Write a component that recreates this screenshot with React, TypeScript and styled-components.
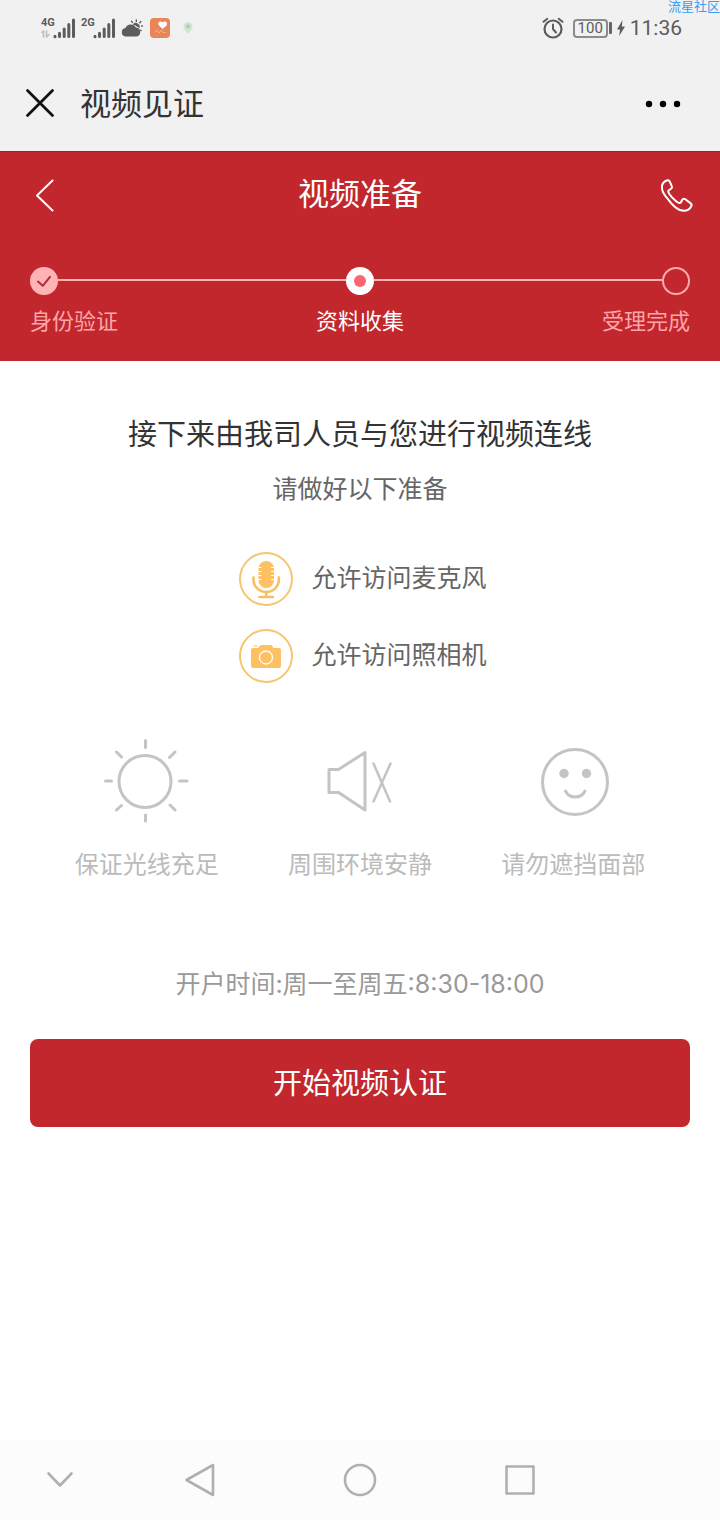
import React from "react";
import styled, { createGlobalStyle } from "styled-components";

const GlobalStyle = createGlobalStyle`
  * { box-sizing: border-box; }
  body {
    margin: 0;
    background: #fff;
    color: #333;
    font-family: Roboto, "Noto Sans CJK SC", sans-serif;
  }
  h1, h2, p, ul, ol { margin: 0; padding: 0; font-weight: 400; list-style: none; }
  svg { display: block; fill: none; overflow: visible; stroke-linecap: round; stroke-linejoin: round; }
`;

const Page = styled.div`
  position: relative;
  display: flex;
  flex-direction: column;
  min-height: 100vh;
  overflow: hidden;
`;

const Watermark = styled.span`
  position: absolute;
  top: 0;
  right: 0;
  font-size: 13px;
  line-height: 13px;
  color: #3d9bf0;
`;

const StatusBar = styled.div`
  display: flex;
  align-items: center;
  justify-content: space-between;
  height: 56px;
  padding: 0 38px 0 41px;
  background: #f1f1f1;
  color: #5c5c5c;
`;

const StatusGroup = styled.div<{ $gap: number }>`
  display: flex;
  align-items: center;
  gap: ${(p) => p.$gap}px;
`;

const Signal = styled.div`
  display: flex;
  align-items: flex-start;
  font-size: 11px;
  line-height: 11px;
  font-weight: 700;
`;

const Network = styled.div`
  display: flex;
  flex-direction: column;
  align-items: flex-start;
  gap: 2px;
  width: 12px;
`;

const Battery = styled.div`
  display: flex;
  align-items: center;
  gap: 1px;
`;

const BatteryBody = styled.span`
  width: 35px;
  border: 2px solid #8b8b8b;
  border-radius: 4px;
  font-size: 15px;
  line-height: 15px;
  text-align: center;
`;

const BatteryTip = styled.span`
  width: 3px;
  height: 12px;
  border-radius: 1px;
  background: #666;
`;

const Clock = styled.time`
  font-size: 21px;
  line-height: 24px;
`;

const IconButton = styled.button`
  display: flex;
  align-items: center;
  justify-content: center;
  padding: 0;
  border: 0;
  background: none;
  color: inherit;
  cursor: pointer;
`;

const AppBar = styled.header`
  display: flex;
  align-items: center;
  height: 95px;
  padding: 0 38px 0 24px;
  background: #f1f1f1;
  color: #111;
`;

const AppTitle = styled.h1`
  flex: 1;
  margin-left: 24px;
  padding-top: 2px;
  font-size: 31px;
  line-height: 40px;
  color: #333;
`;

const Hero = styled.section`
  padding: 0 30px;
  border-top: 1px solid #8c2a32;
  background: #c1272d;
  color: #fff;
`;

const HeroBar = styled.div`
  display: flex;
  align-items: center;
  justify-content: space-between;
  height: 86px;
`;

const HeroTitle = styled.h2`
  font-size: 31px;
  line-height: 44px;
`;

const Track = styled.div`
  display: flex;
  align-items: center;
  margin-top: 29px;
`;

const TrackLine = styled.span`
  flex: 1;
  height: 2px;
  margin-bottom: 2px;
  background: #fbb4b4;
`;

const Labels = styled.ol`
  display: flex;
  justify-content: space-between;
  padding: 11px 0 23px;
`;

const StepLabel = styled.li<{ $active?: boolean }>`
  font-size: 22px;
  line-height: 32px;
  color: ${(p) => (p.$active ? "#fff" : "#fda5a8")};
`;

const Main = styled.main`
  flex: 1;
  display: flex;
  flex-direction: column;
  align-items: center;
  padding: 54px 30px 40px;
`;

const Heading = styled.h2`
  font-size: 29px;
  line-height: 40px;
  color: #333;
`;

const Note = styled.p`
  margin-top: 17px;
  font-size: 25px;
  line-height: 36px;
  color: #666;
`;

const Permissions = styled.ul`
  display: grid;
  gap: 23px;
  margin-top: 44px;
  padding-left: 6px;
`;

const Permission = styled.li`
  display: flex;
  align-items: center;
  gap: 18px;
  font-size: 25px;
  line-height: 36px;
  color: #666;
`;

const Tips = styled.ul`
  display: grid;
  grid-template-columns: repeat(3, 1fr);
  align-self: stretch;
  margin-top: 56px;
  padding: 0 10px;
`;

const Tip = styled.li`
  display: flex;
  flex-direction: column;
  align-items: center;
  gap: 26px;
  font-size: 24px;
  line-height: 32px;
  color: #bbb;
`;

const Hours = styled.p`
  margin-top: 85px;
  font-family: Inter, "Noto Sans CJK SC", sans-serif;
  font-size: 25px;
  line-height: 36px;
  color: #999;
`;

const StartButton = styled.button`
  align-self: stretch;
  height: 88px;
  margin-top: 37px;
  padding: 0 0 4px;
  border: 0;
  border-radius: 8px;
  background: #c1272d;
  color: #fff;
  font: inherit;
  font-size: 29px;
  cursor: pointer;
`;

const NavBar = styled.nav`
  display: grid;
  grid-template-columns: 3fr 4fr 4fr 4fr 3fr;
  height: 80px;
  background: #fcfcfc;
  color: #b0b0b0;
`;

const Bars = () => (
  <svg width="22" height="22" viewBox="0 0 22 22" stroke="#5c5c5c" strokeWidth="3">
    <path d="M2 19.3v.4M6.5 16.3v3.2M11.2 12v7.5M15.8 7.5v12M20.5 3v16.5" />
  </svg>
);

const Weather = () => (
  <svg width="22" height="20" viewBox="0 0 22 20">
    <path
      fill="#5c5c5c"
      d="M4.5 18.5A4.3 4.3 0 0 1 4.4 10 6 6 0 0 1 15 9.4a4.6 4.6 0 0 1 .5 9.1Z"
    />
    <path fill="#5c5c5c" d="M11.6 6.4a4 4 0 0 1 6.8 4 5.8 5.8 0 0 0-2.6-1.9 6.5 6.5 0 0 0-4.2-2.1Z" />
    <path stroke="#5c5c5c" strokeWidth="1.4" d="M15.3 2v1.5M10.5 3.2l1 1.2M19.8 3.5l-1 1.2M20.6 8h.8M19.6 12.2l.5.4" />
  </svg>
);

const HealthApp = () => (
  <svg width="22" height="22" viewBox="0 0 22 22">
    <rect x="1" y="1" width="20" height="20" rx="4" fill="#e98558" />
    <path fill="#fff" d="M13.500 12 9.800 8.200C8 5.400 11.500 3 13.700 5.500c2.300-2.300 5.700.3 3.900 2.900Z" />
    <path stroke="#f8b57c" strokeWidth="1" d="M6 15l2-2 2 3 2.500-3 1.500 2.500h2" />
  </svg>
);

const Pin = () => (
  <svg width="10" height="14" viewBox="-1 0 10 14">
    <path fill="#cfe6d3" d="M5 13C3 10.500.5 8.500.5 5.500a4.500 4.500 0 0 1 9 0C9.500 8.500 7 10.500 5 13Z" />
    <circle cx="5" cy="5.500" r="2" fill="#a5cfae" />
  </svg>
);

const Alarm = () => (
  <svg width="22" height="22" viewBox="0 0 22 22" stroke="#5c5c5c">
    <circle cx="11" cy="12" r="8.500" strokeWidth="2.200" />
    <path strokeWidth="2" d="M11 7.500V12l3 3.500M1.500 4.800 5.300 1.800M20.500 4.800l-3.800-3" />
  </svg>
);

const Bolt = () => (
  <svg width="10" height="18" viewBox="0 0 10 18">
    <path fill="#5c5c5c" d="M6.500 1 1 10.500h3L3.200 17 9 7.500H5.800Z" />
  </svg>
);

const CloseIcon = () => (
  <svg width="32" height="32" viewBox="0 0 32 32" stroke="currentColor" strokeWidth="2.800">
    <path d="M3.500 2.500l25 25M28.500 2.500l-25 25" />
  </svg>
);

const MoreIcon = () => (
  <svg width="38" height="10" viewBox="0 0 38 10">
    {[5, 19, 33].map((x) => (
      <circle key={x} cx={x} cy="5" r="3.200" fill="#000" />
    ))}
  </svg>
);

const BackIcon = () => (
  <svg width="31" height="34" viewBox="0 0 31 34" stroke="currentColor" strokeWidth="2">
    <path d="M22.500 2.500 7 17.500l15.500 15" />
  </svg>
);

const PhoneIcon = () => (
  <svg width="31" height="32" viewBox="-2 0 31 32" stroke="currentColor" strokeWidth="2">
    <path d="M6.300 1.300C3.500 2.300.9 4.700.9 8.300c0 3.500 2.200 7.500 5.400 11 2.400 3.200 4.900 6.300 7.700 8.700 3 2.500 6 3.700 9 3.700 3.200 0 6-2 7.300-4.500.7-1.400.1-2.400-1.200-3.300L24.300 20.200c-1.300-.8-2.400-.6-3.100.5l-1.500 3c-1.300.6-2.700 0-4-1-2.800-2.200-5.700-5-7.400-7.700-.8-1.300-1.200-2.400-1-3.300L10.300 9.500c.9-.7 1-1.400.5-2.400L8.700 2.500C8.200 1.400 7.400.9 6.300 1.300Z" />
  </svg>
);

const StepDone = () => (
  <svg width="28" height="28" viewBox="0 0 28 28">
    <circle cx="14" cy="14" r="14" fill="#ffb3b5" />
    <path d="M8 14.500l4.800 4.300 7.200-9" stroke="#a8323c" strokeWidth="2" />
  </svg>
);

const StepCurrent = () => (
  <svg width="28" height="28" viewBox="0 0 28 28">
    <circle cx="14" cy="14" r="14" fill="#fff" />
    <circle cx="14" cy="14" r="6" fill="#fb6570" />
  </svg>
);

const StepPending = () => (
  <svg width="28" height="28" viewBox="0 0 28 28">
    <circle cx="14" cy="14" r="13" stroke="#fbabad" strokeWidth="2" />
  </svg>
);

const MicIcon = () => (
  <svg width="54" height="54" viewBox="0 0 54 54">
    <circle cx="27" cy="27" r="26" stroke="#f5c56f" strokeWidth="2" />
    <rect x="19.500" y="9" width="15.500" height="27" rx="7.500" fill="#fdc163" />
    <path stroke="#fff" strokeWidth="1" d="M19 15.500h3M19 19.500h3M19 23.500h3M19 27.500h3M32.500 15.500h3M32.500 19.500h3M32.500 23.500h3M32.500 27.500h3" />
    <path stroke="#f5c064" strokeWidth="2.600" d="M14.500 25.500v2a12.700 12.500 0 0 0 25.400 0v-2M27.200 40v4.500M20.500 45h13.500" />
  </svg>
);

const CameraIcon = () => (
  <svg width="54" height="54" viewBox="0 0 54 54">
    <circle cx="27" cy="27" r="26" stroke="#f5c56f" strokeWidth="2" />
    <path
      fill="#fdc163"
      d="M14 19h5l2-2.500q.5-.5 1.500-.5h9q1 0 1.500.5L34.500 19H40q2 0 2 2v16q0 2-2 2H14q-2 0-2-2V21q0-2 2-2ZM14.500 16.500h4v1h-4Z"
    />
    <circle cx="27" cy="28.500" r="6.500" stroke="#fff" strokeWidth="1.300" />
  </svg>
);

const SunIcon = () => (
  <svg width="84" height="84" viewBox="1 0 84 84" stroke="#c4c4c4" strokeWidth="3">
    <circle cx="41" cy="42.500" r="26" />
    <path d="M41.500 1.500v7M41.500 76v6M1.500 42h6M75.500 42h7.500M12.500 13l5 5M71 13l-5.500 5.500M12.500 71l5-4.500M71 71l-5-5" />
  </svg>
);

const MuteIcon = () => (
  <svg width="84" height="84" viewBox="0 0 84 84" stroke="#c4c4c4" strokeWidth="3">
    <path d="M11 30.500v23h9.500L47 71V13.500L20.500 30.500Z" />
    <path strokeWidth="2.500" d="M55.500 24.500l16.500 38M72.500 24.500l-17 38" />
  </svg>
);

const SmileIcon = () => (
  <svg width="84" height="84" viewBox="-1 0 84 84" stroke="#c4c4c4" strokeWidth="3">
    <circle cx="43" cy="43" r="32.500" />
    <path d="M33.500 52c4 8 15.500 8 19.500 0" />
    <g fill="#c4c4c4" stroke="none">
      <circle cx="32" cy="34.500" r="4.700" />
      <circle cx="54.500" cy="34.500" r="4.700" />
    </g>
  </svg>
);

const NavIcon = ({ d }: { d: string }) => (
  <svg width="36" height="36" viewBox="0 0 36 36" stroke="currentColor" strokeWidth="2.600">
    <path d={d} />
  </svg>
);

const NAV_ITEMS = [
  { label: "收起", d: "M6.500 11.500 18 23.500 29.500 11.500" },
  { label: "返回", d: "M31 3v30L4.500 18Z" },
  { label: "主页", d: "M18 3a15 15 0 1 1 0 30 15 15 0 0 1 0-30Z" },
  { label: "最近任务", d: "M4.500 4.500h27v27h-27Z" },
];

const TIPS = [
  { text: "保证光线充足", Icon: SunIcon },
  { text: "周围环境安静", Icon: MuteIcon },
  { text: "请勿遮挡面部", Icon: SmileIcon },
];

export default function App() {
  return (
    <Page lang="zh-CN">
      <GlobalStyle />
      <StatusBar>
        <StatusGroup $gap={6}>
          <Signal>
            <Network>
              4G
              <svg width="9" height="8" viewBox="0 0 9 8" stroke="#bdbdbd" strokeWidth="1.500">
                <path d="M1 2.500 2.500 1v6M5.500 1v6L8 4.500" />
              </svg>
            </Network>
            <Bars />
          </Signal>
          <Signal>
            <Network>2G</Network>
            <Bars />
          </Signal>
          <Weather />
          <HealthApp />
          <StatusGroup $gap={0}>
            <svg width="5" height="14" />
            <Pin />
          </StatusGroup>
        </StatusGroup>
        <StatusGroup $gap={4}>
          <StatusGroup $gap={9}>
            <Alarm />
            <Battery>
              <BatteryBody>100</BatteryBody>
              <BatteryTip />
            </Battery>
          </StatusGroup>
          <Bolt />
          <Clock>11:36</Clock>
        </StatusGroup>
      </StatusBar>
      <Watermark>流星社区</Watermark>

      <AppBar>
        <IconButton type="button" aria-label="关闭">
          <CloseIcon />
        </IconButton>
        <AppTitle>视频见证</AppTitle>
        <IconButton type="button" aria-label="更多">
          <MoreIcon />
        </IconButton>
      </AppBar>

      <Hero>
        <HeroBar>
          <IconButton type="button" aria-label="返回">
            <BackIcon />
          </IconButton>
          <HeroTitle>视频准备</HeroTitle>
          <IconButton type="button" aria-label="电话">
            <PhoneIcon />
          </IconButton>
        </HeroBar>
        <Track>
          <StepDone />
          <TrackLine />
          <StepCurrent />
          <TrackLine />
          <StepPending />
        </Track>
        <Labels>
          <StepLabel>身份验证</StepLabel>
          <StepLabel $active aria-current="step">
            资料收集
          </StepLabel>
          <StepLabel>受理完成</StepLabel>
        </Labels>
      </Hero>

      <Main>
        <Heading>接下来由我司人员与您进行视频连线</Heading>
        <Note>请做好以下准备</Note>
        <Permissions>
          <Permission>
            <MicIcon />
            允许访问麦克风
          </Permission>
          <Permission>
            <CameraIcon />
            允许访问照相机
          </Permission>
        </Permissions>
        <Tips>
          {TIPS.map(({ text, Icon }) => (
            <Tip key={text}>
              <Icon />
              {text}
            </Tip>
          ))}
        </Tips>
        <Hours>开户时间:周一至周五:8:30-18:00</Hours>
        <StartButton type="button">开始视频认证</StartButton>
      </Main>

      <NavBar aria-label="系统导航">
        {NAV_ITEMS.map(({ label, d }) => (
          <IconButton key={label} type="button" aria-label={label}>
            <NavIcon d={d} />
          </IconButton>
        ))}
      </NavBar>
    </Page>
  );
}
